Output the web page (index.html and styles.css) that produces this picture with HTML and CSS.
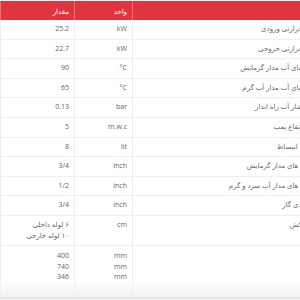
FILE: index.html
```html
<!DOCTYPE html>
<html lang="fa">
<head>
<meta charset="utf-8">
<link rel="stylesheet" href="styles.css">
</head>
<body>
<div class="wrap">
  <table class="spec" dir="rtl">
    <colgroup>
      <col class="c-desc">
      <col class="c-unit">
      <col class="c-val">
    </colgroup>
    <thead>
      <tr><th>عنوان</th><th>واحد</th><th>مقدار</th></tr>
    </thead>
    <tbody>
      <tr><td>ظرفیت حرارتی ورودی</td><td><bdi>kW</bdi></td><td><bdi>25.2</bdi></td></tr>
      <tr><td>ظرفیت حرارتی خروجی</td><td><bdi>kW</bdi></td><td><bdi>22.7</bdi></td></tr>
      <tr><td>حداکثر دمای آب مدار گرمایش</td><td><bdi>°C</bdi></td><td><bdi>90</bdi></td></tr>
      <tr><td>حداکثر دمای آب مدار آب گرم</td><td><bdi>°C</bdi></td><td><bdi>65</bdi></td></tr>
      <tr><td>حداقل فشار آب راه انداز</td><td><bdi>bar</bdi></td><td><bdi>0.13</bdi></td></tr>
      <tr><td>حداکثر ارتفاع پمپ</td><td><bdi>m.w.c</bdi></td><td><bdi>5</bdi></td></tr>
      <tr><td>حجم منبع انبساط</td><td><bdi>lit</bdi></td><td><bdi>8</bdi></td></tr>
      <tr><td>قطر لوله های مدار گرمایش</td><td><bdi>inch</bdi></td><td><bdi>3/4</bdi></td></tr>
      <tr><td>قطر لوله های مدار آب سرد و گرم</td><td><bdi>inch</bdi></td><td><bdi>1/2</bdi></td></tr>
      <tr><td>قطر ورودی گاز</td><td><bdi>inch</bdi></td><td><bdi>3/4</bdi></td></tr>
      <tr><td>قطر دودکش</td><td><bdi>cm</bdi></td><td>۶ لوله داخلی<br>۱۰ لوله خارجی</td></tr>
      <tr class="tall"><td>ابعاد</td><td><bdi>mm</bdi><br><bdi>mm</bdi><br><bdi>mm</bdi></td><td><bdi>400</bdi><br><bdi>740</bdi><br><bdi>346</bdi></td></tr>
    </tbody>
  </table>
  <div class="fade"></div>
</div>
</body>
</html>
```
FILE: styles.css
```css
html, body {
  margin: 0;
  padding: 0;
  background: #efefef;
}
.wrap {
  position: relative;
  width: 300px;
  height: 296px;
  overflow: hidden;
  background: #fff;
  border-bottom: 1px solid #dedede;
  padding-top: 1px;
}
.spec {
  width: 331px;
  border-collapse: collapse;
  table-layout: fixed;
  font-family: "Open Sans", "DejaVu Sans", sans-serif;
  font-size: 7px;
  color: #666;
}
.c-desc { width: 199px; }
.c-unit { width: 58px; }
.c-val { width: 74px; }
.spec th {
  background: #e0343f;
  color: #fff;
  font-weight: normal;
  text-align: right;
  padding: 5px 5px 3px;
  line-height: 11px;
  border-left: 1px solid #e9737a;
  white-space: nowrap;
}
.spec td {
  text-align: right;
  vertical-align: top;
  padding: 4px 5px;
  line-height: 10.6px;
  border-bottom: 1px solid #efefef;
  border-left: 1px solid #efefef;
  white-space: nowrap;
}
.spec tr.tall td {
  height: 42px;
  padding-top: 5px;
}
.fade {
  position: absolute;
  left: 0;
  right: 0;
  bottom: 0;
  height: 18px;
  background: linear-gradient(to bottom, rgba(245,245,245,0), #f3f3f3);
}
```
